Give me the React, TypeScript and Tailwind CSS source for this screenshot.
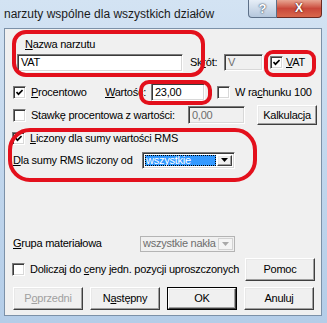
import React from 'react';

const sunken =
    'border border-t-[#7a7a7a] border-l-[#7a7a7a] border-r-white border-b-white shadow-[inset_1px_1px_0_#3a3a3a,inset_-1px_-1px_0_#d8d8d8]';
const raised =
    'border border-t-white border-l-white border-r-[#3f3f3f] border-b-[#3f3f3f] shadow-[inset_-1px_-1px_0_#a0a0a0,inset_1px_1px_0_#e8e8e8] bg-[#f0f0f0]';

const Check = ({ checked }: { checked?: boolean }) => (
    <div className={`w-[13px] h-[13px] shrink-0 bg-white flex items-center justify-center ${sunken}`}>
        {checked && (
            <svg width="7" height="7" viewBox="0 0 7 7">
                <polyline points="0.5,3 2.5,5.2 6.6,1" fill="none" stroke="#000" strokeWidth="1.7" />
            </svg>
        )}
    </div>
);

const Btn = ({ children, className = '', disabled }: { children: React.ReactNode; className?: string; disabled?: boolean }) => (
    <div className={`${raised} flex items-center justify-center ${disabled ? 'text-[#a0a0a0]' : 'text-black'} ${className}`}>
        {children}
    </div>
);

const Arrow = ({ color }: { color: string }) => (
    <svg width="7" height="4" viewBox="0 0 7 4">
        <polygon points="0,0 7,0 3.5,4" fill={color} />
    </svg>
);

const Red = ({ className }: { className: string }) => (
    <div className={`absolute border-[4px] border-[#e3101c] pointer-events-none ${className}`} />
);

export default function App() {
    return (
        <div className="relative w-[327px] h-[323px] overflow-hidden bg-gradient-to-b from-[#d3e3f3] via-[#c2d7ed] to-[#b4cde8] font-['Liberation_Sans',Arial,sans-serif] text-[11px] leading-[13px] tracking-[-0.25px] text-black">
            {/* title bar */}
            <div className="h-[28px] flex items-start">
                <div className="pl-[4px] pt-[7px] text-[12px] leading-[15px] tracking-normal text-[#1b1b1b]">
                    narzuty wspólne dla wszystkich działów
                </div>
                <div className="ml-auto mr-[5px] flex">
                    <div className="w-[29px] h-[18px] rounded-bl-[4px] border border-t-0 border-[#5d7088] bg-gradient-to-b from-[#e6eef7] to-[#b5c7dc] flex items-center justify-center text-white text-[13px] font-bold tracking-normal [text-shadow:0_0_2px_#3b4a5e,0_0_1px_#3b4a5e]">
                        ?
                    </div>
                    <div className="w-[45px] h-[18px] rounded-br-[4px] border border-t-0 border-l-0 border-[#6b2a22] bg-gradient-to-b from-[#e7a592] via-[#c9483a] to-[#d9674c] flex items-center justify-center text-white text-[12px] font-bold tracking-normal [text-shadow:0_0_2px_#5a1c14,0_0_1px_#5a1c14]">
                        X
                    </div>
                </div>
            </div>

            {/* client area */}
            <div className="ml-[4px] mr-[5px] h-[288px] border border-[#7c91a8] bg-[#f0f0f0] flex flex-col">
                <div className="mt-[9px] pl-[20px] h-[13px]">
                    <u>N</u>azwa narzutu
                </div>

                <div className="mt-[2px] h-[19px] flex items-center">
                    <div className={`ml-[12px] w-[166px] h-[18px] bg-white pl-[3px] flex items-center ${sunken}`}>VAT</div>
                    <div className="ml-[7px] w-[34px]">Sk<u>r</u>ót:</div>
                    <div className={`w-[39px] h-[17px] bg-[#f0f0f0] pl-[3px] flex items-center text-[#6d6d6d] ${sunken}`}>V</div>
                    <div className="ml-[7px]"><Check checked /></div>
                    <div className="ml-[3px]"><u>V</u>AT</div>
                </div>

                <div className="mt-[11px] h-[18px] flex items-center">
                    <div className="ml-[8px]"><Check checked /></div>
                    <div className="ml-[5px] w-[74px]"><u>P</u>rocentowo</div>
                    <div className="w-[46px]"><u>W</u>artość:</div>
                    <div className={`w-[54px] h-[18px] bg-white pl-[3px] flex items-center ${sunken}`}>23,00</div>
                    <div className="ml-[12px]"><Check /></div>
                    <div className="ml-[5px]">W ra<u>c</u>hunku 100</div>
                </div>

                <div className="mt-[4px] h-[20px] flex items-center">
                    <div className="ml-[8px]"><Check /></div>
                    <div className="ml-[5px] w-[152px]">Stawkę procentowa z wartości:</div>
                    <div className={`ml-[5px] w-[57px] h-[18px] bg-[#f0f0f0] pl-[3px] flex items-center text-[#6d6d6d] ${sunken}`}>0,00</div>
                    <Btn className="ml-[12px] w-[60px] h-[20px]">Kalkulacja</Btn>
                </div>

                <div className="mt-[6px] h-[14px] flex items-center">
                    <div className="ml-[7px]"><Check checked /></div>
                    <div className="ml-[5px]"><u>L</u>iczony dla sumy wartości RMS</div>
                </div>

                <div className="mt-[6px] h-[18px] flex items-center">
                    <div className="ml-[8px] w-[129px]"><u>D</u>la sumy RMS liczony od</div>
                    <div className={`w-[93px] h-[17px] bg-white flex items-center p-[2px] ${sunken}`}>
                        <div className="flex-1 h-full bg-[#3399ff] text-white pl-[1px] outline outline-1 outline-dotted outline-[#000] -outline-offset-1 flex items-center">
                            wszystkie
                        </div>
                        <div className={`w-[15px] h-full ml-[1px] flex items-center justify-center ${raised}`}>
                            <Arrow color="#000" />
                        </div>
                    </div>
                </div>

                <div className="mt-[66px] h-[17px] flex items-center">
                    <div className="ml-[8px] w-[127px]"><u>G</u>rupa materiałowa</div>
                    <div className={`w-[95px] h-[16px] bg-[#f0f0f0] flex items-center p-[1px] border border-[#b4b4b4]`}>
                        <div className="flex-1 h-full overflow-hidden whitespace-nowrap text-[#6d6d6d] pl-[1px] flex items-center">
                            wszystkie nakła
                        </div>
                        <div className="w-[15px] h-full flex items-center justify-center border border-[#d2d2d2] bg-[#f4f4f4]">
                            <Arrow color="#a8a8a8" />
                        </div>
                    </div>
                </div>

                <div className="mt-[6px] h-[23px] flex items-center">
                    <div className="ml-[7px]"><Check /></div>
                    <div className="ml-[5px] w-[215px]">Doliczaj do <u>c</u>eny jedn. pozycji uproszczonych</div>
                    <Btn className="w-[70px] h-[23px]">Pomoc</Btn>
                </div>

                <div className="mt-[6px] h-[23px] ml-[8px] flex gap-[7px]">
                    <Btn disabled className="w-[70px] h-[23px]">P<u>o</u>przedni</Btn>
                    <Btn className="w-[70px] h-[23px]">N<u>a</u>stępny</Btn>
                    <div className="w-[70px] h-[23px] border border-black flex">
                        <Btn className="flex-1">OK</Btn>
                    </div>
                    <Btn className="w-[70px] h-[23px]">Anuluj</Btn>
                </div>
            </div>

            {/* hand-drawn red markings */}
            <Red className="left-[12px] top-[30px] w-[193px] h-[47px] rounded-[14px]" />
            <Red className="left-[264px] top-[50px] w-[52px] h-[27px] rounded-[9px]" />
            <Red className="left-[139px] top-[80px] w-[73px] h-[25px] rounded-[10px]" />
            <Red className="left-[8px] top-[128px] w-[249px] h-[54px] rounded-[22px]" />
        </div>
    );
}
